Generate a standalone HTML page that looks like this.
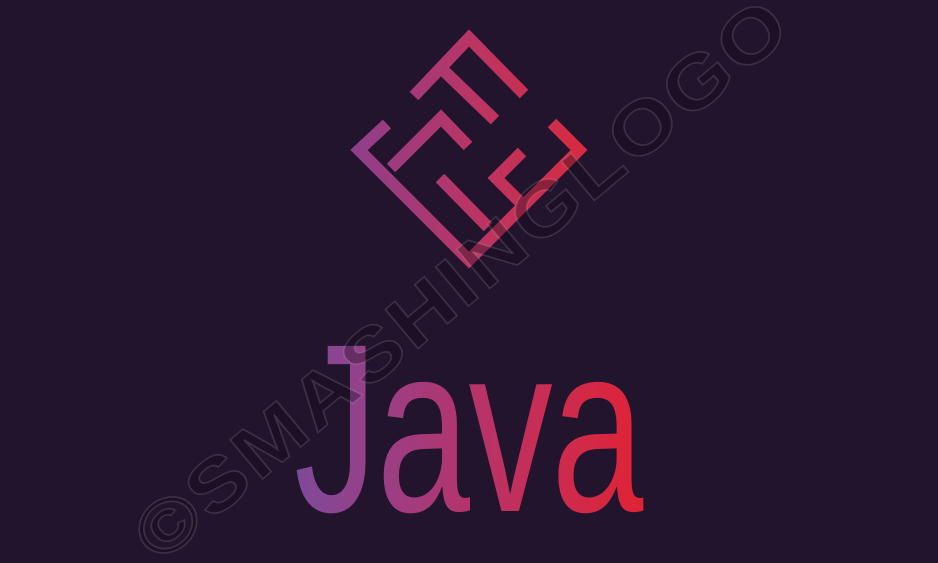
<!DOCTYPE html>
<html><head><style>
html,body{margin:0;padding:0;width:938px;height:563px;overflow:hidden;background:#22142d}
.java{position:absolute;left:294px;top:308px;font-family:"Liberation Sans",sans-serif;font-size:240px;line-height:1;white-space:nowrap;
background:linear-gradient(90deg,#7e4a9a 0%,#a53a7c 35%,#c82d55 70%,#e02334 100%);-webkit-background-clip:text;background-clip:text;color:transparent;
transform-origin:0 0;transform:scaleX(0.7);letter-spacing:-2px}
svg{position:absolute;left:0;top:0}
</style></head><body>
<svg width="938" height="563" viewBox="0 0 938 563">
<defs><linearGradient id="g" x1="350" y1="0" x2="590" y2="0" gradientUnits="userSpaceOnUse">
<stop offset="0" stop-color="#8e3f8d"/><stop offset="0.5" stop-color="#b93565"/><stop offset="1" stop-color="#d92a3e"/></linearGradient></defs>
<g fill="none" stroke="url(#g)" stroke-width="12" stroke-linejoin="miter" stroke-linecap="butt">
<polyline points="414,96 469,38 524,94"/>
<line x1="443" y1="70" x2="495" y2="120"/>
<polyline points="387,124 359,150 469,260 579,150 552,123"/>
<polyline points="391,168 441,118 468,146"/>
<line x1="440" y1="178" x2="488" y2="227"/>
<polyline points="522,152 496,178 520,202"/>
</g>
</svg>
<div class="java">Java</div>
<svg width="938" height="563" viewBox="0 0 938 563">
<text x="0" y="0" transform="translate(160,565) rotate(-40)" font-family="Liberation Sans,sans-serif" font-weight="bold" font-size="74" letter-spacing="3" fill="rgba(20,10,25,0.35)" stroke="rgba(255,255,255,0.13)" stroke-width="1.5" textLength="830" lengthAdjust="spacingAndGlyphs">©SMASHINGLOGO</text>
</svg>
</body></html>
